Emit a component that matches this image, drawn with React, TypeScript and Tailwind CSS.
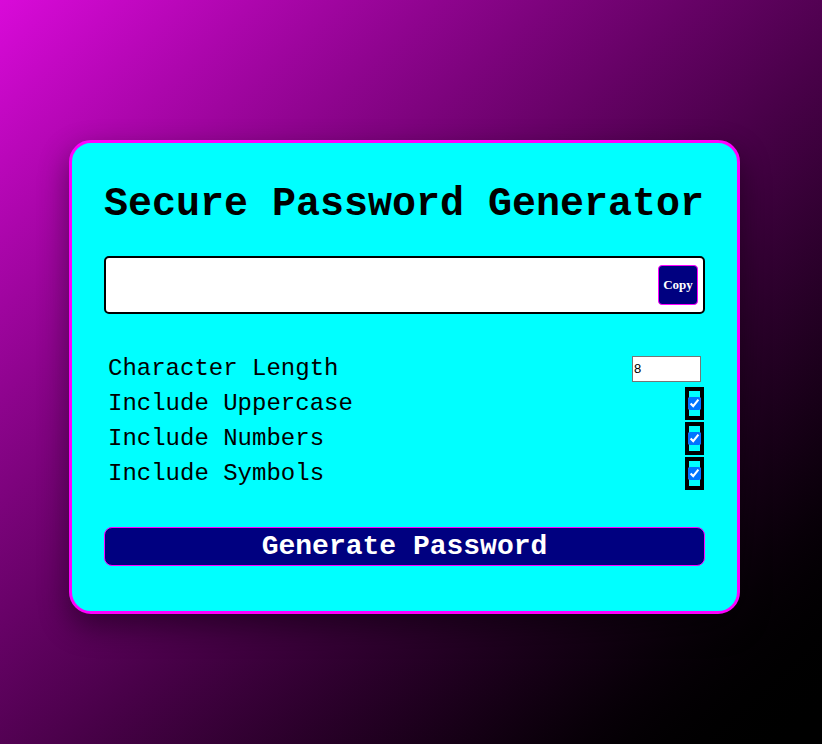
import React, { useState } from 'react';

const options = ['Include Uppercase', 'Include Numbers', 'Include Symbols'];

const App = () => {
  const [length, setLength] = useState('8');
  const [checked, setChecked] = useState<boolean[]>([true, true, true]);

  return (
    <div className="min-h-screen w-full bg-linear-to-br from-[#d90ad9] to-black pt-[140px] pl-[69px] font-['Courier_New','Nimbus_Mono_PS','FreeMono','Liberation_Mono',monospace]">
      <div className="w-[671px] rounded-[22px] border-[3px] border-[#ff00ff] bg-[#00ffff] px-[32px] pt-[39px] pb-[45px] shadow-[0_12px_30px_rgba(0,0,0,0.45)]">
        <h1 className="text-[40px] leading-[45px] font-bold text-black">Secure Password Generator</h1>

        <div className="mt-[29px] flex h-[58px] items-center rounded-[5px] border-2 border-black bg-white pr-[5px]">
          <input className="h-full flex-1 bg-transparent px-3 outline-none" readOnly value="" />
          <button className="flex h-[40px] w-[40px] items-center justify-center rounded-[4px] border border-[#ff00ff] bg-[#000080] font-['Liberation_Serif',serif] text-[13px] font-bold text-white">
            Copy
          </button>
        </div>

        <div className="mt-[37px] flex flex-col">
          <div className="flex h-[35px] items-center justify-between pl-[4px] pr-[4px]">
            <span className="text-[24px] leading-[27px] text-black">Character Length</span>
            <input
              type="number"
              value={length}
              onChange={(e) => setLength(e.target.value)}
              className="h-[26px] w-[69px] border border-[#767676] bg-white px-[1px] font-['Liberation_Sans',sans-serif] text-[13px] text-black outline-none [appearance:textfield] [&::-webkit-inner-spin-button]:appearance-none"
            />
          </div>
          {options.map((label, i) => (
            <div key={label} className="flex h-[35px] items-center justify-between pl-[4px] pr-[1px]">
              <span className="text-[24px] leading-[27px] text-black">{label}</span>
              <span className="flex h-[33px] w-[19px] items-center justify-center border-4 border-black">
                <input
                  type="checkbox"
                  checked={checked[i]}
                  onChange={() => setChecked(checked.map((c, j) => (j === i ? !c : c)))}
                  className="m-0 h-[13px] w-[13px] shrink-0 accent-[#0075ff]"
                />
              </span>
            </div>
          ))}
        </div>

        <button className="mt-[36px] flex h-[39px] w-full items-center justify-center rounded-[8px] border border-[#ff00ff] bg-[#000080] text-[28px] font-bold leading-none text-white">
          Generate Password
        </button>
      </div>
    </div>
  );
};

export default App;
